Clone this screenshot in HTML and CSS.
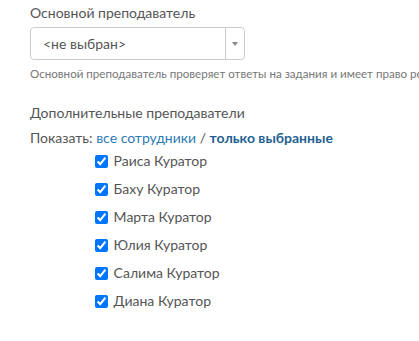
FILE: index.html
```html
<!DOCTYPE html>
<html lang="ru">
<head>
    <meta charset="UTF-8">
    <title>Преподаватели</title>
    <link rel="stylesheet" href="styles.css">
</head>
<body>
    <div class="form">
        <div class="field">
            <label class="field-label">Основной преподаватель</label>
            <div class="select">
                <span class="select-value">&lt;не выбран&gt;</span>
                <span class="select-arrow"><span class="caret"></span></span>
            </div>
            <p class="help">Основной преподаватель проверяет ответы на задания и имеет право редактировать курс</p>
        </div>

        <div class="field extra">
            <label class="field-label">Дополнительные преподаватели</label>
            <div class="filter">
                Показать: <a href="#" class="link">все сотрудники</a> / <a href="#" class="link active">только выбранные</a>
            </div>
            <ul class="teachers">
                <li><label><input type="checkbox" checked> Раиса Куратор</label></li>
                <li><label><input type="checkbox" checked> Баху Куратор</label></li>
                <li><label><input type="checkbox" checked> Марта Куратор</label></li>
                <li><label><input type="checkbox" checked> Юлия Куратор</label></li>
                <li><label><input type="checkbox" checked> Салима Куратор</label></li>
                <li><label><input type="checkbox" checked> Диана Куратор</label></li>
            </ul>
        </div>
    </div>
</body>
</html>
```

FILE: styles.css
```css
body {
    margin: 0;
    font-family: Lato, "Open Sans", sans-serif;
    color: #555;
    background: #fff;
    overflow: hidden;
}

.form {
    padding: 3px 0 0 30px;
    white-space: nowrap;
}

.field-label {
    display: block;
    font-size: 14px;
    line-height: 20px;
}

.select {
    display: flex;
    width: 215px;
    height: 33px;
    margin-top: 4px;
    border: 1px solid #ccc;
    border-radius: 4px;
    box-sizing: border-box;
}

.select-value {
    flex: 1;
    padding-left: 12px;
    font-size: 14px;
    line-height: 31px;
    color: #555;
}

.select-arrow {
    width: 18px;
    border-left: 1px solid #ccc;
    display: flex;
    align-items: center;
    justify-content: center;
}

.caret {
    width: 0;
    height: 0;
    border-left: 3px solid transparent;
    border-right: 3px solid transparent;
    border-top: 4px solid #888;
}

.help {
    margin: 6px 0 0;
    font-size: 11.6px;
    line-height: 16px;
    color: #777;
}

.extra {
    margin-top: 21px;
}

.filter {
    margin-top: 5px;
    font-size: 14px;
    line-height: 20px;
}

.link {
    color: #2c7bb6;
    text-decoration: none;
}

.link.active {
    color: #1f5f93;
    font-weight: bold;
}

.teachers {
    list-style: none;
    margin: -1px 0 0;
    padding: 0 0 0 64px;
}

.teachers li {
    height: 28px;
    font-size: 14px;
    line-height: 27px;
}

.teachers input {
    width: 13px;
    height: 13px;
    margin: 0 2px 0 1px;
    vertical-align: -2px;
}
```
